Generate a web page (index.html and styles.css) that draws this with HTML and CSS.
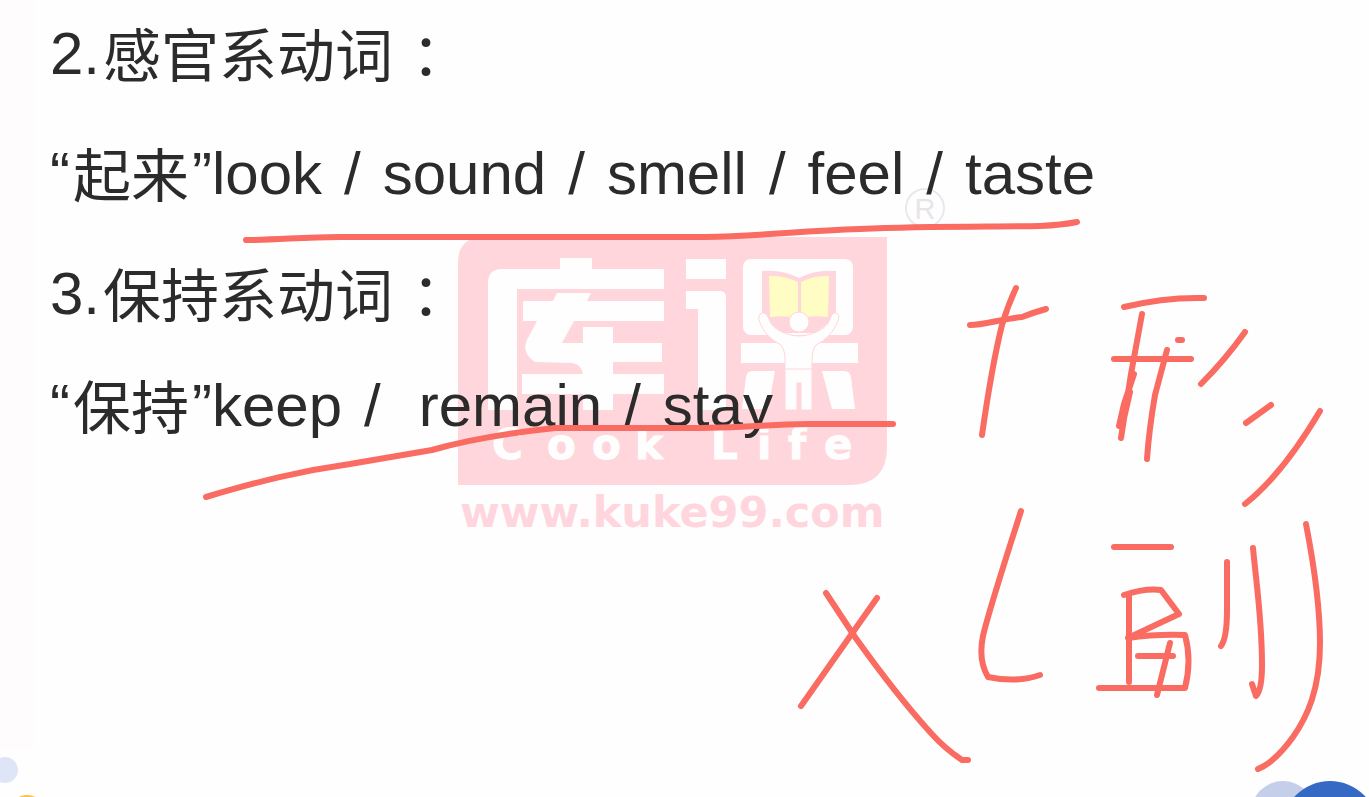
FILE: index.html
```html
<!DOCTYPE html>
<html lang="zh-CN">
<head>
<meta charset="utf-8">
<meta name="viewport" content="width=device-width, initial-scale=1">
<title>系动词</title>
<link rel="stylesheet" href="styles.css">
</head>
<body>
<main class="slide">
  <svg class="layer" viewBox="0 0 1369 797" aria-hidden="true">
    <rect class="edge" x="0" y="0" width="35" height="750"/>
    <circle class="dot-pale" cx="5" cy="770" r="13"/>
    <circle class="dot-orange" cx="27" cy="812" r="17"/>
    <circle class="dot-light" cx="1283" cy="813" r="32"/>
    <circle class="dot-blue" cx="1330" cy="829" r="48"/>
    <circle class="reg-ring" cx="925" cy="208" r="19"/>
    <text class="reg-letter" x="925" y="219" text-anchor="middle">R</text>
    <path class="logo-box" d="M484 237H887V447Q887 485 849 485H458V263Q458 237 484 237Z"/>
    <g class="logo-white">
      <rect x="560" y="258" width="32" height="14"/>
      <path d="M502 269H664V289H517V410H488V283Q488 269 502 269Z"/>
      <path d="M557 293H591L587 301H664V321H574L562 343H583V327H613V343H662V362H613V374H664V394H613V410H583V394H522V374H583Q581 364 572 363L535 362Q520 352 528 338L537 321H523V301H553Z"/>
      <rect x="686" y="259" width="40" height="20"/>
      <path d="M686 291H720Q726 291 726 297V410H698V309H686Z"/>
      <rect x="743" y="259" width="110" height="76" rx="8"/>
      <rect x="741" y="343" width="117" height="20"/>
      <path d="M752 371H775L768 409H742L746 377Q747 371 752 371Z"/>
      <path d="M822 371H844Q850 371 851 377L855 409H832Z"/>
    </g>
    <path class="logo-pink" d="M762 271Q782 269 799 278Q816 269 836 271V318L815 333H783L762 318Z"/>
    <path class="logo-page" d="M769 276Q784 275 798 282V318Q784 315 770 317ZM801 282Q814 275 829 276L828 317Q814 315 801 318Z"/>
    <path class="logo-man" d="M760 314Q765 310 769 319Q772 329 787 334Q799 338 811 334Q827 329 830 319Q833 310 838 314Q840 318 836 325Q830 338 816 345Q812 350 812 360V410H801V383H797V410H785V360Q785 350 781 345Q767 338 761 325Q757 318 760 314Z"/>
    <path class="logo-belt" d="M785 369H812"/>
    <circle class="logo-head" cx="799" cy="322" r="10"/>
    <text class="logo-name" y="459" x="492 547 592 635 711 757 788 824">CookLife</text>
    <text class="logo-url" x="460" y="527">www.kuke99.com</text>
  </svg>

  <div class="notes">
    <section class="topic">
      <h2 class="line">2.<span class="han">感官系动词<span class="colon" lang="zh-TW">：</span></span></h2>
      <p class="line words"><span>“<span class="han">起来</span>”look</span><span>/</span><span>sound</span><span>/</span><span>smell</span><span>/</span><span>feel</span><span>/</span><span>taste</span></p>
    </section>
    <section class="topic compact">
      <h2 class="line">3.<span class="han">保持系动词<span class="colon" lang="zh-TW">：</span></span></h2>
      <p class="line words"><span>“<span class="han">保持</span>”keep</span><span>/</span><span class="wide">remain</span><span>/</span><span>stay</span></p>
    </section>
  </div>

  <svg class="layer ink" viewBox="0 0 1369 797" role="img" aria-label="+形 ×(副)">
    <path d="M246 240C280 240 300 237 340 237H705C760 236 800 231 860 229C930 226 1000 227 1040 226Q1062 225 1077 222"/>
    <path d="M206 497C260 481 300 471 350 464L432 450Q480 436 555 428H700C760 428 760 424 810 424H893"/>
    <path d="M1016 288Q1008 305 1002 325C992 365 987 400 982 435"/>
    <path d="M970 325C985 325 1000 319 1022 317Q1035 312 1046 309"/>
    <path d="M1124 307Q1165 297 1204 298"/>
    <path d="M1142 314L1131 374L1121 438M1134 374L1124 404L1119 426M1130 392L1122 427"/>
    <path d="M1114 359H1191"/>
    <path d="M1167 350L1155 395Q1149 430 1147 459"/>
    <path d="M1178 340H1182"/>
    <path d="M1245 332Q1225 360 1201 384"/>
    <path d="M1246 423L1271 405"/>
    <path d="M1320 411Q1282 475 1245 504"/>
    <path d="M826 593L855 637C880 672 910 710 930 732Q944 748 962 760L968 760"/>
    <path d="M877 598L801 706"/>
    <path d="M1021 511C1007 555 989 610 983 636Q978 660 988 677Q1017 683 1040 675"/>
    <path d="M1114 547H1171"/>
    <path d="M1124 595Q1145 588 1161 590L1179 614L1130 637M1129 596V682"/>
    <path d="M1128 638Q1155 634 1185 635Q1192 660 1185 688H1099"/>
    <path d="M1138 656H1173M1170 643L1157 695"/>
    <path d="M1227 562V610Q1227 638 1221 646"/>
    <path d="M1253 548C1257 590 1262 620 1262 665Q1262 690 1256 696L1252 684"/>
    <path d="M1306 524C1312 555 1320 600 1320 643C1320 690 1307 717 1293 737Q1275 762 1258 769"/>
  </svg>
</main>
</body>
</html>
```
FILE: styles.css
```css
* {
  box-sizing: border-box;
}

body {
  margin: 0;
  background: #fefefe;
  color: #2b2b2b;
  font-family: "Liberation Sans", "Noto Sans CJK SC", sans-serif;
}

.slide {
  position: relative;
  min-height: 100vh;
  overflow: hidden;
}

.layer {
  position: absolute;
  top: 0;
  left: 0;
  width: 100%;
  pointer-events: none;
}

.notes,
.topic {
  position: relative;
  display: flex;
  flex-direction: column;
  gap: 40px;
}

.notes {
  padding: 14px 50px;
}

.compact {
  gap: 32px;
}

.line {
  margin: 0;
  font-size: 60px;
  font-weight: 400;
  line-height: 80px;
  white-space: nowrap;
}

.han {
  margin: 0 3px;
  font-family: "Noto Sans CJK SC", sans-serif;
  font-size: 58px;
  line-height: 58px;
  vertical-align: -3px;
}

.colon {
  padding-left: 4px;
  font-family: "Noto Sans CJK TC", sans-serif;
  vertical-align: -2px;
}

.words {
  display: flex;
  align-items: baseline;
  gap: 22px;
}

.wide {
  padding-left: 16px;
}

.edge {
  fill: #fffcfd;
}

.dot-pale {
  fill: #dde5f6;
}

.dot-orange {
  fill: #fcbf4c;
}

.dot-light {
  fill: #c5cfea;
}

.dot-blue {
  fill: #3569c4;
}

.reg-ring {
  fill: none;
  stroke: #ebe8ec;
  stroke-width: 2;
}

.reg-letter {
  fill: #e8e4ea;
  font-size: 29px;
}

.logo-box,
.logo-pink {
  fill: #ffd6db;
}

.logo-white {
  fill: #fefefe;
}

.logo-page {
  fill: #fffcc4;
}

.logo-man,
.logo-head,
.logo-belt {
  fill: #fefefe;
  stroke: #ffd6db;
  stroke-width: 1;
}

.logo-name {
  fill: #fefefe;
  stroke: #fefefe;
  stroke-width: 1;
  font: 700 42px "DejaVu Sans", sans-serif;
}

.logo-url {
  fill: #ffd6de;
  font: 700 43px "DejaVu Sans", sans-serif;
}

.ink path {
  fill: none;
  stroke: #fa6b61;
  stroke-width: 6;
  stroke-linecap: round;
  stroke-linejoin: round;
}
```
